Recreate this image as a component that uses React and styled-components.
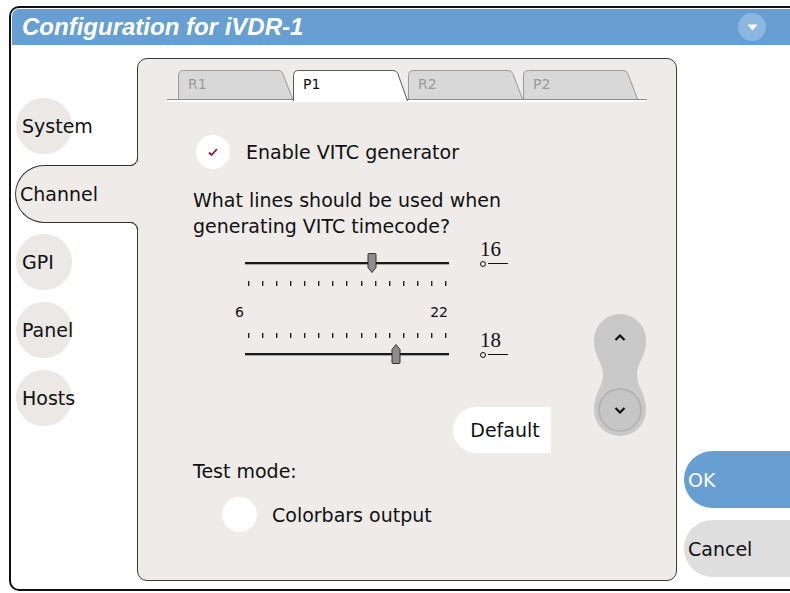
import React from 'react';
import styled, { createGlobalStyle } from 'styled-components';

const PANEL_BG = '#eeebe9';
const BLUE = '#679fd2';

const GlobalStyle = createGlobalStyle`
  html, body { margin: 0; padding: 0; background: #fff; }
  body {
    width: 790px; height: 593px; overflow: hidden;
    font-family: "DejaVu Sans", "Noto Sans", sans-serif;
    color: #111;
  }
`;

const Screen = styled.div`
  padding: 6px 0 0 9px;
`;

const Window = styled.div`
  box-sizing: border-box;
  width: 781px;
  height: 585px;
  border-top: 2px solid #111;
  border-left: 2px solid #111;
  border-bottom: 2px solid #111;
  border-radius: 10px 0 0 10px;
  padding: 1px 0 0 1px;
  display: flex;
  flex-direction: column;
  overflow: hidden;
`;

const TitleBar = styled.div`
  height: 36px;
  flex: none;
  background: ${BLUE};
  border-top-left-radius: 7px;
  display: flex;
  align-items: center;
  justify-content: space-between;
  padding: 0 24px 0 10px;
`;

const Title = styled.div`
  font-family: "Liberation Sans", Arial, sans-serif;
  font-weight: bold;
  font-style: italic;
  font-size: 24px;
  color: #fff;
`;

const DropButton = styled.div`
  width: 28px;
  height: 28px;
  border-radius: 50%;
  background: #8bb7e0;
  display: flex;
  align-items: center;
  justify-content: center;
`;

const Body = styled.div`
  flex: 1;
  display: flex;
  min-height: 0;
`;

const Nav = styled.div`
  width: 125px;
  flex: none;
  padding-top: 52px;
  display: flex;
  flex-direction: column;
  gap: 10px;
  position: relative;
  z-index: 1;
`;

const NavItem = styled.div`
  box-sizing: border-box;
  height: 58px;
  display: flex;
  align-items: center;
  font-size: 19px;
  position: relative;
  ${({ $active }) =>
    $active
      ? `
    margin-left: 3px;
    margin-right: -1px;
    padding-left: 4px;
    background: ${PANEL_BG};
    border: 1px solid #333;
    border-right: none;
    border-radius: 29px 0 0 29px;
    &::before, &::after {
      content: '';
      position: absolute;
      right: 0;
      width: 7px;
      height: 7px;
      border-right: 1px solid #333;
    }
    &::before {
      top: -8px;
      border-bottom: 1px solid #333;
      border-bottom-right-radius: 8px;
      box-shadow: 4px 4px 0 4px ${PANEL_BG};
    }
    &::after {
      bottom: -8px;
      border-top: 1px solid #333;
      border-top-right-radius: 8px;
      box-shadow: 4px -4px 0 4px ${PANEL_BG};
    }
  `
      : `
    padding-left: 10px;
    background: radial-gradient(circle at 32px 29px, #ebe8e5 27.5px, transparent 28.5px);
  `}
`;

const Panel = styled.div`
  box-sizing: border-box;
  width: 540px;
  height: 523px;
  margin-top: 13px;
  flex: none;
  border: 1px solid #3a3a3a;
  border-radius: 10px;
  background: ${PANEL_BG};
  display: flex;
  flex-direction: column;
`;

const TabStrip = styled.div`
  margin: 11px 29px 0 29px;
  height: 29px;
  padding-left: 11px;
  display: flex;
  align-items: flex-start;
  border-bottom: 1px solid #8c8c8c;
  box-shadow: 0 2px 0 #fff;
`;

const Tab = styled.div`
  position: relative;
  z-index: ${({ $active }) => ($active ? 2 : 0)};
  width: 115px;
  height: ${({ $active }) => ($active ? 31 : 29)}px;
  box-sizing: border-box;
  padding-left: 10px;
  line-height: 29px;
  font-size: 14px;
  color: ${({ $active }) => ($active ? '#111' : '#9a9a9a')};
  flex: none;
`;

const TabShape = styled.svg`
  position: absolute;
  left: 0;
  top: 0;
  z-index: -1;
`;

const Content = styled.div`
  padding-left: 55px;
  display: flex;
  flex-direction: column;
  align-items: flex-start;
`;

const CheckRow = styled.div`
  margin-top: 35px;
  display: flex;
  align-items: center;
`;

const RoundBox = styled.div`
  width: ${({ $size }) => $size}px;
  height: ${({ $size }) => $size}px;
  margin-left: ${({ $indent }) => $indent}px;
  border-radius: 50%;
  background: #fff;
  display: flex;
  align-items: center;
  justify-content: center;
  flex: none;
`;

const Label = styled.span`
  font-size: 19px;
  margin-left: ${({ $gap }) => $gap}px;
`;

const Question = styled.div`
  margin-top: 18px;
  font-size: 19px;
  line-height: 26px;
`;

const MainRow = styled.div`
  display: flex;
  align-items: flex-start;
  margin-top: 14px;
`;

const SliderCol = styled.div`
  width: 358px;
  display: flex;
  flex-direction: column;
`;

const SliderRow = styled.div`
  height: 20px;
  display: flex;
  align-items: stretch;
  margin-top: ${({ $mt }) => $mt}px;
`;

const Track = styled.div`
  position: relative;
  width: 204px;
  margin-left: 52px;
  &::before {
    content: '';
    position: absolute;
    left: 0;
    right: 0;
    top: 9px;
    height: 2px;
    background: #1a1a1a;
    box-shadow: 0 1px 0 #a8a8a8;
  }
`;

const Thumb = styled.svg`
  position: absolute;
  top: 0;
  z-index: 1;
`;

const ValueBox = styled.div`
  margin-left: 31px;
  height: 20px;
  display: flex;
  flex-direction: column;
  justify-content: flex-end;
`;

const ValueNum = styled.div`
  flex: none;
  font-family: "Liberation Serif", "Times New Roman", serif;
  font-size: 21px;
  line-height: 18px;
  margin-bottom: -5px;
  padding-left: 0;
`;

const Mark = styled.div`
  flex: none;
  height: 20px;
  display: flex;
  align-items: center;
  gap: 2px;
`;

const Dot = styled.div`
  box-sizing: border-box;
  width: 6px;
  height: 6px;
  border: 1.5px solid #111;
  border-radius: 50%;
  margin-top: 2px;
`;

const Line = styled.div`
  width: 20px;
  height: 1px;
  background: #111;
`;

const Ticks = styled.div`
  margin-left: 55px;
  width: 198px;
  height: 5px;
  display: flex;
  justify-content: space-between;
  margin-top: ${({ $mt }) => $mt}px;
`;

const TickMark = styled.div`
  width: 1px;
  height: 5px;
  background: #222;
  box-shadow: 1px 0 0 #999;
`;

const RangeLabels = styled.div`
  margin-top: 19px;
  margin-left: 42px;
  width: 213px;
  display: flex;
  justify-content: space-between;
  font-size: 14px;
  line-height: 14px;
`;

const DefaultButton = styled.div`
  align-self: flex-end;
  margin-top: 43px;
  width: 98px;
  height: 46px;
  box-sizing: border-box;
  padding-left: 6px;
  background: #fff;
  border-radius: 23px 0 0 23px;
  display: flex;
  align-items: center;
  justify-content: center;
  font-size: 19px;
`;

const Spin = styled.svg`
  margin-left: 42px;
  margin-top: 60px;
  flex: none;
`;

const TestMode = styled.div`
  margin-top: 7px;
  font-size: 19px;
  line-height: 22px;
`;

const RadioRow = styled.div`
  margin-top: 15px;
  display: flex;
  align-items: center;
`;

const Actions = styled.div`
  flex: 1;
  padding-top: 406px;
  padding-left: 7px;
  display: flex;
  flex-direction: column;
  gap: 12px;
`;

const ActionButton = styled.div`
  height: 57px;
  box-sizing: border-box;
  border-radius: 29px 0 0 29px;
  padding-left: 4px;
  display: flex;
  align-items: center;
  font-size: 19px;
  background: ${({ $primary }) => ($primary ? BLUE : '#dedede')};
  color: ${({ $primary }) => ($primary ? '#fff' : '#111')};
`;

const navItems = ['System', 'Channel', 'GPI', 'Panel', 'Hosts'];
const tabs = ['R1', 'P1', 'R2', 'P2'];

function TabItem({ label, active }) {
  const h = active ? 31 : 29;
  const d = `M0.5 ${h} V5.5 Q0.5 0.5 5.5 0.5 H100 Q103.5 0.5 104.8 3.5 L114.5 ${h}`;
  return (
    <Tab $active={active}>
      <TabShape width="115" height={h} viewBox={`0 0 115 ${h}`}>
        <path d={d} fill={active ? '#fff' : '#d8d8d8'} stroke={active ? '#5a5a5a' : '#9a9a9a'} strokeWidth="1" />
      </TabShape>
      {label}
    </Tab>
  );
}

function Slider({ value, min = 6, max = 22, down, mt }) {
  const pct = (value - min) / (max - min);
  const center = 4 + pct * 196;
  return (
    <SliderRow $mt={mt}>
      <Track>
        <Thumb width="10" height="20" viewBox="0 0 10 20" style={{ left: `${center - 5}px` }}>
          {down ? (
            <path d="M1 1.5 Q1 0.5 2 0.5 H8 Q9 0.5 9 1.5 V14.5 L5 19.5 L1 14.5 Z" fill="#8d8d8d" stroke="#333" strokeWidth="1" />
          ) : (
            <path d="M1 18.5 Q1 19.5 2 19.5 H8 Q9 19.5 9 18.5 V5.5 L5 0.5 L1 5.5 Z" fill="#8d8d8d" stroke="#333" strokeWidth="1" />
          )}
        </Thumb>
      </Track>
      <ValueBox>
        <ValueNum>{value}</ValueNum>
        <Mark>
          <Dot />
          <Line />
        </Mark>
      </ValueBox>
    </SliderRow>
  );
}

function TickRow({ mt }) {
  return (
    <Ticks $mt={mt}>
      {Array.from({ length: 15 }).map((_, i) => (
        <TickMark key={i} />
      ))}
    </Ticks>
  );
}

export default function App() {
  return (
    <>
      <GlobalStyle />
      <Screen>
        <Window>
          <TitleBar>
            <Title>Configuration for iVDR-1</Title>
            <DropButton>
              <svg width="11" height="7" viewBox="0 0 11 7">
                <path d="M0.5 0.5 H10.5 L5.5 6.5 Z" fill="#fff" />
              </svg>
            </DropButton>
          </TitleBar>
          <Body>
            <Nav>
              {navItems.map((n) => (
                <NavItem key={n} $active={n === 'Channel'}>
                  {n}
                </NavItem>
              ))}
            </Nav>
            <Panel>
              <TabStrip>
                {tabs.map((t) => (
                  <TabItem key={t} label={t} active={t === 'P1'} />
                ))}
              </TabStrip>
              <Content>
                <CheckRow>
                  <RoundBox $size={34} $indent={3}>
                    <svg width="10" height="8" viewBox="0 0 10 8">
                      <path d="M1 4.5 L3.5 7 L9 1" fill="none" stroke="#8e1b2c" strokeWidth="1.8" />
                    </svg>
                  </RoundBox>
                  <Label $gap={16}>Enable VITC generator</Label>
                </CheckRow>
                <Question>
                  What lines should be used when
                  <br />
                  generating VITC timecode?
                </Question>
                <MainRow>
                  <SliderCol>
                    <Slider value={16} down mt={0} />
                    <TickRow mt={8} />
                    <RangeLabels>
                      <span>6</span>
                      <span>22</span>
                    </RangeLabels>
                    <TickRow mt={14} />
                    <Slider value={18} mt={6} />
                    <DefaultButton>Default</DefaultButton>
                  </SliderCol>
                  <Spin width="54" height="124" viewBox="0 0 54 124">
                    <path
                      d="M27 1 A26 26 0 0 1 53 27 C53 44 44 50 44 62 C44 74 53 80 53 97 A26 26 0 0 1 1 97 C1 80 10 74 10 62 C10 50 1 44 1 27 A26 26 0 0 1 27 1 Z"
                      fill="#c9c9c9"
                    />
                    <circle cx="27" cy="97" r="21" fill="#c6c6c6" stroke="#b4b4b4" strokeWidth="2" />
                    <path d="M22.5 27 L27 22.5 L31.5 27" fill="none" stroke="#111" strokeWidth="2.2" />
                    <path d="M22.5 95 L27 99.5 L31.5 95" fill="none" stroke="#111" strokeWidth="2.2" />
                  </Spin>
                </MainRow>
                <TestMode>Test mode:</TestMode>
                <RadioRow>
                  <RoundBox $size={35} $indent={29} />
                  <Label $gap={15}>Colorbars output</Label>
                </RadioRow>
              </Content>
            </Panel>
            <Actions>
              <ActionButton $primary>OK</ActionButton>
              <ActionButton>Cancel</ActionButton>
            </Actions>
          </Body>
        </Window>
      </Screen>
    </>
  );
}
